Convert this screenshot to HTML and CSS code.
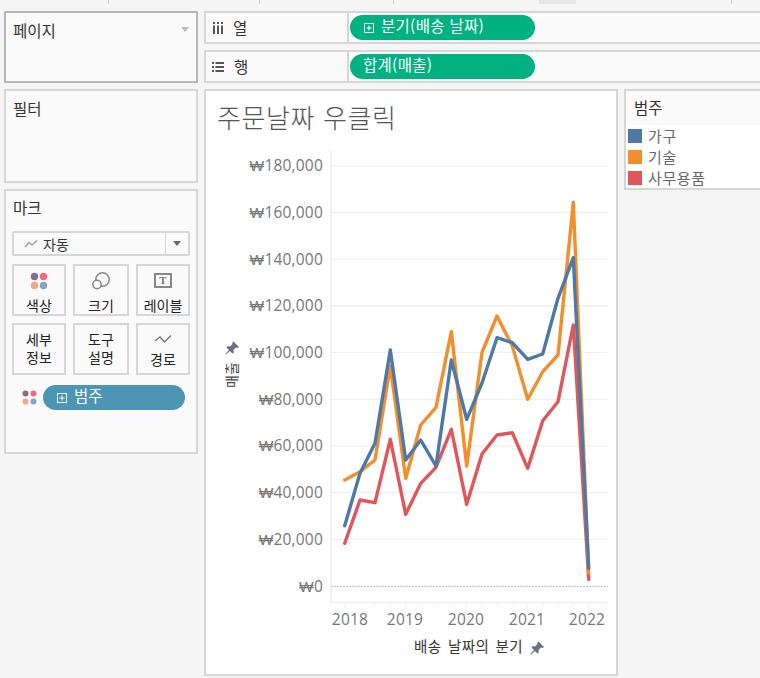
FILE: index.html
```html
<!DOCTYPE html>
<html lang="ko">
<head>
<meta charset="utf-8">
<title>주문날짜 우클릭</title>
<link rel="stylesheet" href="styles.css">
</head>
<body>
<div class="strip">
  <span class="tick t1"></span><span class="tick t2"></span><span class="tick t3"></span><span class="tab"></span><span class="tick t4"></span>
</div>
<main class="app">
  <aside class="side">
    <section class="card pages">
      <h2 class="card-title">페이지</h2>
      <span class="caret pages-caret"></span>
    </section>
    <section class="card filters">
      <h2 class="card-title">필터</h2>
    </section>
    <section class="card marks">
      <h2 class="card-title marks-title">마크</h2>
      <div class="select">
        <div class="select-main">
          <svg class="select-icon" width="14" height="10" viewBox="0 0 14 10"><path d="M1 8 L5 3.5 L8 6 L13 1.5" fill="none" stroke="#999" stroke-width="1.3"/></svg>
          <span>자동</span>
        </div>
        <div class="select-arrow"><span class="caret dark"></span></div>
      </div>
      <div class="mark-grid">
        <button class="mark-btn">
          <svg class="mark-icon" width="18" height="18" viewBox="0 0 18 18"><circle cx="4.5" cy="4.5" r="3.7" fill="#7f6d9b"/><circle cx="13.5" cy="4.5" r="3.7" fill="#f2697c"/><circle cx="4.5" cy="13.5" r="3.7" fill="#f5a880"/><circle cx="13.5" cy="13.5" r="3.7" fill="#7ea5cf"/></svg>
          <span class="mark-text">색상</span>
        </button>
        <button class="mark-btn">
          <svg class="mark-icon" width="20" height="18" viewBox="0 0 20 18"><circle cx="11.5" cy="7.5" r="6.7" fill="none" stroke="#888" stroke-width="1.5"/><circle cx="6" cy="12.5" r="4.2" fill="#fafafa" stroke="#888" stroke-width="1.5"/></svg>
          <span class="mark-text">크기</span>
        </button>
        <button class="mark-btn">
          <span class="t-icon">T</span>
          <span class="mark-text">레이블</span>
        </button>
        <button class="mark-btn two">
          <span class="mark-text">세부</span><span class="mark-text">정보</span>
        </button>
        <button class="mark-btn two">
          <span class="mark-text">도구</span><span class="mark-text">설명</span>
        </button>
        <button class="mark-btn path">
          <svg class="mark-icon" width="18" height="12" viewBox="0 0 18 12"><path d="M1 7 L6 3 L10.500 8 L17 1.500" fill="none" stroke="#777" stroke-width="1.4"/></svg>
          <span class="mark-text">경로</span>
        </button>
      </div>
      <div class="mark-row">
        <svg class="mini-dots" width="15" height="15" viewBox="0 0 15 15"><circle cx="3.500" cy="3.500" r="3" fill="#7f6d9b"/><circle cx="11.500" cy="3.500" r="3" fill="#f2697c"/><circle cx="3.500" cy="11.500" r="3" fill="#f5a880"/><circle cx="11.500" cy="11.500" r="3" fill="#7ea5cf"/></svg>
        <div class="pill blue wide">
          <svg class="plus" width="10" height="10" viewBox="0 0 10 10"><path d="M.5.5h9v9h-9zM5 2.500v5M2.500 5h5" fill="none" stroke="#fff"/></svg>
          <span class="pill-label">범주</span>
        </div>
      </div>
    </section>
  </aside>
  <div class="content">
    <div class="shelf">
      <div class="shelf-head">
        <svg width="10" height="12" viewBox="0 0 10 12"><path d="M0 0h2v2H0zM4 0h2v2H4zM8 0h2v2H8zM0 3.500h2V12H0zM4 3.500h2V12H4zM8 3.500h2V12H8z" fill="#555"/></svg>
        <span class="shelf-label">열</span>
      </div>
      <div class="shelf-body">
        <div class="pill green">
          <svg class="plus" width="10" height="10" viewBox="0 0 10 10"><path d="M.5.5h9v9h-9zM5 2.500v5M2.500 5h5" fill="none" stroke="#fff"/></svg>
          <span class="pill-label">분기(배송 날짜)</span>
        </div>
      </div>
    </div>
    <div class="shelf">
      <div class="shelf-head">
        <svg class="rows-icon" width="12" height="10" viewBox="0 0 12 10"><path d="M0 0h2v2H0zM3.500 0H12v2H3.500zM0 4h2v2H0zM3.500 4H12v2H3.500zM0 8h2v2H0zM3.500 8H12v2H3.500z" fill="#555"/></svg>
        <span class="shelf-label">행</span>
      </div>
      <div class="shelf-body">
        <div class="pill green"><span class="pill-label">합계(매출)</span></div>
      </div>
    </div>
    <div class="viz-row">
      <section class="chart-card">
        <h1 class="chart-title">주문날짜 우클릭</h1>
        <svg class="chart" viewBox="206 135 410 539" width="410" height="539">
          <g class="grid">
            <path d="M331 165.800H608M331 212.500H608M331 259.300H608M331 306H608M331 352.300H608M331 399.300H608M331 445.800H608M331 492.500H608M331 539.300H608"/>
          </g>
          <path class="axis" d="M331 150V602.500H608"/>
          <path class="axis-tick" d="M345 602V608M405.700 602V608M466.700 602V608M527.700 602V608M588.700 602V608"/>
          <path class="axis-minor" d="M360 602V605M375 602V605M390.300 602V605M420.700 602V605M436 602V605M451.300 602V605M482 602V605M497 602V605M512.300 602V605M542.700 602V605M558 602V605M573.300 602V605M603.700 602V605"/>
          <path class="zero" d="M331 586.500H608"/>
          <g class="y-labels">
            <text x="323" y="171">₩180,000</text>
            <text x="323" y="218">₩160,000</text>
            <text x="323" y="265">₩140,000</text>
            <text x="323" y="311">₩120,000</text>
            <text x="323" y="358">₩100,000</text>
            <text x="323" y="405">₩80,000</text>
            <text x="323" y="451">₩60,000</text>
            <text x="323" y="498">₩40,000</text>
            <text x="323" y="545">₩20,000</text>
            <text x="323" y="592">₩0</text>
          </g>
          <g class="x-labels">
            <text x="350" y="625">2018</text>
            <text x="405" y="625">2019</text>
            <text x="466" y="625">2020</text>
            <text x="527" y="625">2021</text>
            <text x="587" y="625">2022</text>
          </g>
          <polyline class="line red" points="344.700,543.300 360,500 375,502.700 390.300,439.300 405.700,514.300 420.700,483.300 436,467.300 451.300,429.300 466.700,504.300 482,454 497,435 512.300,432.700 527.700,468.300 542.700,420.700 558,401.700 573.300,325 588.700,579.300"/>
          <polyline class="line orange" points="344.700,480 360,471.700 375,460 390.300,366 405.700,478.300 420.700,425 436,407.300 451.300,331.700 466.700,466 482,352.300 497,316 512.300,346 527.700,399.300 542.700,371.700 558,355 573.300,202.300 588.700,573"/>
          <polyline class="line blue-line" points="344.700,525.700 360,473.300 375,443.300 390.300,350 405.700,460 420.700,440 436,466 451.300,360 466.700,419.300 482,383 497,337.700 512.300,342.700 527.700,359.300 542.700,354 558,298.300 573.300,257.700 588.700,568.300"/>
          <path class="pin" transform="translate(225 341)" d="M8.500 0.500 L14 6 L12.500 7 L11 6.500 L8.500 9 L8.800 11.500 L7.500 12.500 L5 10 L1 13.500 L0.500 13 L4 9 L1.500 6.500 L2.500 5.300 L5 5.500 L7.500 3 L7.300 1.700 Z"/>
          <text class="y-title" transform="translate(237 375) rotate(-90)">매출</text>
          <text class="x-title" x="414" y="652">배송 날짜의 분기</text>
          <path class="pin" transform="translate(530 641)" d="M8.500 0.500 L14 6 L12.500 7 L11 6.500 L8.500 9 L8.800 11.500 L7.500 12.500 L5 10 L1 13.500 L0.500 13 L4 9 L1.500 6.500 L2.500 5.300 L5 5.500 L7.500 3 L7.300 1.700 Z"/>
        </svg>
      </section>
      <section class="legend">
        <h2 class="legend-title">범주</h2>
        <ul class="legend-list">
          <li class="legend-item"><span class="swatch s-blue"></span>가구</li>
          <li class="legend-item"><span class="swatch s-orange"></span>기술</li>
          <li class="legend-item"><span class="swatch s-red"></span>사무용품</li>
        </ul>
      </section>
    </div>
  </div>
</main>
</body>
</html>
```

FILE: styles.css
```css
* { box-sizing: border-box; }
html, body { margin: 0; padding: 0; }
body {
  width: 760px;
  height: 678px;
  overflow: hidden;
  background: #f5f5f5;
  font-family: "Noto Sans CJK KR", "Noto Sans", sans-serif;
  color: #333;
}
h1, h2, ul { margin: 0; padding: 0; font-weight: 400; }

.strip { display: flex; height: 11px; align-items: flex-start; }
.tick { display: block; width: 1px; height: 4px; background: #cfcfcf; flex: none; }
.t1 { margin-left: 108px; }
.t2 { margin-left: 150px; }
.t3 { margin-left: 133px; }
.tab { display: block; width: 37px; height: 4px; margin-left: 145px; background: #e6e6e6; flex: none; }
.t4 { margin-left: 155px; }

.app { display: grid; grid-template-columns: 194px 562px; column-gap: 6px; padding-left: 4px; }
.side { display: flex; flex-direction: column; gap: 6px; }
.card { background: #fafafa; border: 2px solid #d6d6d6; position: relative; }
.card-title { font-size: 15.500px; line-height: 20px; padding: 7px 0 0 7px; color: #333; }
.pages { height: 72px; border-color: #b6b6b6; }
.filters { height: 94px; }
.marks { height: 265px; padding: 0 6px; }
.marks-title { margin-left: -6px; padding-top: 6px; }

.caret { display: block; width: 0; height: 0; border: 4px solid transparent; border-top: 5px solid #bbb; border-bottom: 0; }
.caret.dark { border-top-color: #666; }
.pages-caret { position: absolute; top: 14px; right: 7px; }

.select { display: flex; height: 25px; margin-top: 14px; border: 2px solid #d6d6d6; border-radius: 2px; background: #fafafa; }
.select-main { flex: 1; display: flex; align-items: center; gap: 5px; padding-left: 10px; font-size: 14px; color: #333; border-right: 1px solid #d6d6d6; }
.select-arrow { width: 22px; display: flex; align-items: center; justify-content: center; }

.mark-grid { display: grid; grid-template-columns: 54px 56px 54px; grid-auto-rows: 52px; gap: 7px; margin-top: 8px; }
.mark-btn {
  display: flex; flex-direction: column; align-items: center;
  padding: 6px 0 0; margin: 0;
  background: #fafafa; border: 2px solid #d6d6d6;
  font-family: inherit; font-size: 14px; line-height: 18px; color: #222;
}
.mark-text { display: block; height: 18px; overflow: hidden; }
.mark-icon { display: block; margin-bottom: 6px; flex: none; }
.mark-btn.two { padding-top: 5px; }
.mark-btn.path { padding-top: 9px; }
.mark-btn.path .mark-icon { margin-bottom: 4px; }
.t-icon {
  display: flex; align-items: center; justify-content: center;
  width: 18px; height: 15px; margin: 1px 0 8px;
  border: 2px solid #888; color: #777;
  font-family: "Liberation Serif", serif; font-size: 11px; font-weight: 700; line-height: 1;
}

.mark-row { display: flex; align-items: center; gap: 6px; margin: 10px 0 0 10px; }
.mini-dots { display: block; flex: none; }

.pill { display: flex; align-items: center; height: 25px; border-radius: 13px; color: #fff; font-size: 15.500px; }
.pill-label { line-height: 20px; padding-bottom: 5px; margin-left: 7px; }
.plus { display: block; flex: none; }
.green { width: 185px; background: #02b182; padding-left: 14px; letter-spacing: .3px; }
.green > .pill-label:first-child { margin-left: -1px; }
.blue { background: #4a96b4; }
.wide { width: 142px; padding-left: 14px; }

.content { display: flex; flex-direction: column; gap: 6px; }
.shelf { display: flex; height: 33px; background: #fafafa; border: 2px solid #d6d6d6; }
.shelf-head { width: 143px; display: flex; align-items: center; gap: 10px; padding-left: 7px; border-right: 2px solid #d6d6d6; color: #333; }
.shelf-label { font-size: 15.500px; line-height: 20px; padding-bottom: 2px; }
.rows-icon { margin-left: -1px; }
.shelf-body { flex: 1; display: flex; align-items: center; padding-left: 1px; }

.viz-row { display: flex; gap: 6px; align-items: flex-start; }
.chart-card { width: 414px; height: 587px; background: #fff; border: 2px solid #d6d6d6; flex: none; }
.chart-title { font-size: 26px; letter-spacing: .6px; line-height: 36px; height: 44px; padding: 8px 0 0 11px; color: #555; font-weight: 300; }
.chart { display: block; }
.grid path { fill: none; stroke: #f0f0f0; stroke-width: 1.3; }
.axis { fill: none; stroke: #eee; stroke-width: 1.5; }
.axis-tick, .axis-minor { fill: none; stroke: #eee; stroke-width: 1; }
.zero { fill: none; stroke: #c4c4c4; stroke-width: 1; stroke-dasharray: 2 1; }
.y-labels text, .x-labels text { font-family: "Open Sans", sans-serif; font-size: 15.500px; letter-spacing: .2px; fill: #777; }
.y-labels text { text-anchor: end; }
.x-labels text { text-anchor: middle; }
.line { fill: none; stroke-width: 3.4; stroke-linejoin: round; stroke-linecap: round; }
.red { stroke: #e15759; }
.orange { stroke: #f28e2b; }
.blue-line { stroke: #4e79a7; }
.pin { fill: #66707e; }
.y-title { font-size: 14px; fill: #444; text-anchor: middle; }
.x-title { font-size: 14.500px; fill: #333; letter-spacing: .4px; word-spacing: 2px; }

.legend { width: 140px; height: 101px; background: #fff; border: 2px solid #d6d6d6; border-right: 0; flex: none; }
.legend-title { height: 34px; background: #fafafa; font-size: 15.500px; line-height: 20px; padding: 6px 0 0 8px; color: #333; }
.legend-list { list-style: none; }
.legend-item { display: flex; align-items: center; gap: 6px; height: 21px; font-size: 15px; letter-spacing: .6px; color: #666; }
.swatch { display: block; width: 14px; height: 14px; margin-left: 2px; flex: none; }
.s-blue { background: #4e79a7; }
.s-orange { background: #f28e2b; }
.s-red { background: #e15759; }
```
